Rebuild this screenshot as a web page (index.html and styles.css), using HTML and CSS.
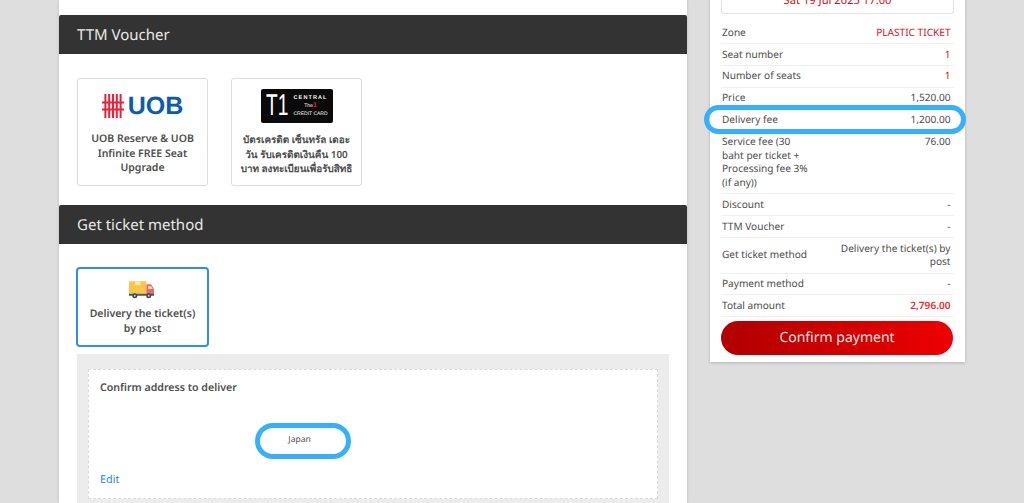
FILE: index.html
```html
<!DOCTYPE html>
<html lang="en">
  <head>
    <meta charset="utf-8" />
    <title>Booking payment</title>
    <link rel="stylesheet" href="styles.css">
  </head>
  <body>
    <div class="page">
      <main class="content">
        <section class="block">
          <h2 class="block-title">TTM Voucher</h2>
          <div class="card-list">
            <div class="card">
              <div class="card-logo uob">
                <svg class="uob-mark" width="22" height="24" viewBox="0 0 22 24">
                  <path d="M3.4 0v24M7.2 0v24M11 0v24M14.8 0v24M18.6 0v24" stroke="#e8203a" stroke-width="2" />
                  <path d="M0 8.5h22M0 15.5h22" stroke="#e8203a" stroke-width="2" />
                </svg>
                <span class="uob-text">UOB</span>
              </div>
              <p>UOB Reserve &amp; UOB Infinite FREE Seat Upgrade</p>
            </div>
            <div class="card">
              <div class="card-logo">
                <div class="t1-logo">
                  <span class="t1-big">T1</span>
                  <div class="t1-small">
                    <span class="t1-central">CENTRAL</span>
                    <span class="t1-the">The<b>1</b></span>
                    <span class="t1-credit">CREDIT CARD</span>
                  </div>
                </div>
              </div>
              <p class="thai">บัตรเครดิต เซ็นทรัล เดอะ วัน รับเครดิตเงินคืน 100 บาท ลงทะเบียนเพื่อรับสิทธิ</p>
            </div>
          </div>
        </section>

        <section class="block">
          <h2 class="block-title">Get ticket method</h2>
          <div class="method-list">
            <div class="card method active">
              <svg class="truck" width="25" height="19" viewBox="0 0 26 19">
                <rect x="0" y="1" width="18" height="14" rx="1" fill="#fbc54c" />
                <rect x="6" y="1" width="6" height="4" fill="#f6e3b0" />
                <path d="M18 4h5l3 5v6H18z" fill="#ee6a5f" />
                <path d="M20 6h3l1.6 3H20z" fill="#f3e3e0" />
                <rect x="0" y="14" width="26" height="2" fill="#46586a" />
                <circle cx="6" cy="16" r="2.6" fill="#34495e" />
                <circle cx="6" cy="16" r="1" fill="#c9d2da" />
                <circle cx="20.5" cy="16" r="2.6" fill="#34495e" />
                <circle cx="20.5" cy="16" r="1" fill="#c9d2da" />
              </svg>
              <p>Delivery the ticket(s) by post</p>
            </div>
          </div>
          <div class="address-panel">
            <div class="address-box">
              <h3>Confirm address to deliver</h3>
              <div class="address-text">
                <span class="circled">Japan</span>
              </div>
              <a class="edit" href="#">Edit</a>
            </div>
          </div>
        </section>
      </main>

      <aside class="summary">
        <div class="date-box">Sat 19 Jul 2025 17:00</div>
        <div class="row"><span class="label">Zone</span><span class="value red">PLASTIC TICKET</span></div>
        <div class="row"><span class="label">Seat number</span><span class="value red">1</span></div>
        <div class="row"><span class="label">Number of seats</span><span class="value red">1</span></div>
        <div class="row"><span class="label">Price</span><span class="value">1,520.00</span></div>
        <div class="row highlighted"><span class="label">Delivery fee</span><span class="value">1,200.00</span></div>
        <div class="row"><span class="label narrow">Service fee (30 baht per ticket + Processing fee 3% (if any))</span><span class="value">76.00</span></div>
        <div class="row"><span class="label">Discount</span><span class="value">-</span></div>
        <div class="row"><span class="label">TTM Voucher</span><span class="value">-</span></div>
        <div class="row center"><span class="label">Get ticket method</span><span class="value wrap">Delivery the ticket(s) by post</span></div>
        <div class="row"><span class="label">Payment method</span><span class="value">-</span></div>
        <div class="row"><span class="label">Total amount</span><span class="value total">2,796.00</span></div>
        <button class="confirm">Confirm payment</button>
      </aside>
    </div>
  </body>
</html>
```

FILE: styles.css
```css
html, body {
  margin: 0;
  padding: 0;
  height: 503px;
  overflow: hidden;
}

body {
  background-color: #dedede;
  font-family: "Noto Sans", "Open Sans", sans-serif;
  color: #4d4d4d;
  text-rendering: geometricPrecision;
}

.page {
  display: flex;
  align-items: flex-start;
  gap: 23px;
  padding-left: 59px;
}

/* left column */

.content {
  width: 628px;
  height: 503px;
  padding-top: 15px;
  box-sizing: border-box;
  background-color: #fff;
  box-shadow: 0 0 3px rgba(0, 0, 0, 0.15);
  overflow: hidden;
}

.block-title {
  margin: 0;
  height: 39px;
  padding-left: 18px;
  background-color: #333;
  border-radius: 2px 2px 0 0;
  color: #e9e9e9;
  font-size: 15px;
  font-weight: 400;
  line-height: 41px;
}

.card-list {
  display: flex;
  gap: 23px;
  padding: 24px 18px 19px;
}

.card {
  width: 131px;
  height: 108px;
  box-sizing: border-box;
  padding: 0 4px;
  border: 1px solid #dcdcdc;
  border-radius: 3px;
  text-align: center;
}

.card p {
  margin: 0;
  font-size: 10.5px;
  font-weight: 600;
  line-height: 14.7px;
}

.card p.thai {
  font-size: 9.9px;
}

.card-logo {
  display: flex;
  align-items: center;
  justify-content: center;
  height: 52px;
  padding-top: 1px;
}

.uob {
  gap: 4px;
}

.uob-text {
  color: #0b5cab;
  font-family: "Liberation Sans", sans-serif;
  font-size: 25px;
  font-weight: 700;
  line-height: 24px;
}

.t1-logo {
  display: flex;
  align-items: center;
  gap: 6px;
  width: 72px;
  height: 34px;
  box-sizing: border-box;
  padding-left: 5px;
  background-color: #0a0a0a;
  border-radius: 2px;
  color: #fff;
  font-family: "Liberation Sans", sans-serif;
}

.t1-big {
  width: 22px;
  font-size: 30px;
  line-height: 30px;
  transform: scaleX(0.64);
  transform-origin: left;
}

.t1-small {
  display: flex;
  flex-direction: column;
  align-items: center;
  gap: 2px;
}

.t1-small span {
  display: block;
  line-height: 6px;
}

.t1-central {
  font-size: 5.5px;
  font-weight: 700;
  letter-spacing: 1.1px;
}

.t1-the {
  font-size: 5px;
}

.t1-the b {
  color: #e8112d;
  font-size: 7px;
}

.t1-credit {
  font-size: 5px;
}

.method-list {
  padding: 23px 18px 7px 17px;
}

.method {
  width: 133px;
  height: 80px;
  padding: 11px 8px 0;
  border: 2px solid #2f8fe8;
  border-radius: 4px;
}

.truck {
  display: block;
  margin: 0 0 8px 43px;
}

.address-panel {
  margin: 0 18px;
  padding: 15px 11px 5px;
  background-color: #ececec;
}

.address-box {
  height: 130px;
  box-sizing: border-box;
  padding: 11px 11px;
  background-color: #fff;
  border: 1px dashed #dadada;
}

.address-box h3 {
  margin: 0;
  font-size: 10.6px;
  font-weight: 600;
  line-height: 14px;
}

.address-text {
  margin: 28px 0 0 155px;
  width: 96px;
  height: 36px;
}

.circled {
  display: block;
  height: 36px;
  box-sizing: border-box;
  padding: 6px 7px 0 0;
  border: 5px solid #36b0f8;
  border-radius: 18px;
  font-size: 8.5px;
  line-height: 12px;
  text-align: center;
}

.edit {
  display: block;
  margin-top: 13px;
  color: #2f88dc;
  font-size: 10.8px;
  text-decoration: none;
}

/* right column */

.summary {
  width: 255px;
  height: 372px;
  box-sizing: border-box;
  margin-top: -10px;
  padding: 0 11px;
  background-color: #fff;
  box-shadow: 0 1px 3px rgba(0, 0, 0, 0.2);
}

.date-box {
  height: 23.5px;
  box-sizing: border-box;
  margin-bottom: 8.8px;
  border: 1px solid #e3e3e3;
  border-top: 0;
  border-radius: 0 0 3px 3px;
  color: #d0121b;
  font-size: 11.2px;
  line-height: 22px;
  text-align: center;
}

.row {
  display: flex;
  justify-content: space-between;
  gap: 10px;
  padding: 3.5px 3.5px 3.5px 1px;
  border-bottom: 1px solid #f0f0f0;
  font-size: 10.1px;
  line-height: 13.8px;
}

.row.center {
  align-items: center;
}

.label {
  white-space: nowrap;
}

.label.narrow {
  width: 88px;
  white-space: normal;
}

.value {
  white-space: nowrap;
  text-align: right;
}

.value.wrap {
  width: 118px;
  white-space: normal;
}

.red {
  color: #d0121b;
}

.total {
  color: #ee2a30;
  font-weight: 600;
}

.highlighted {
  position: relative;
}

/* the oval drawn over the delivery row */
.highlighted::after {
  content: "";
  position: absolute;
  top: -4px;
  left: -17px;
  width: 262px;
  height: 29px;
  box-sizing: border-box;
  border: 5px solid #36b0f8;
  border-radius: 15px;
}

.confirm {
  display: block;
  width: 232px;
  height: 34px;
  margin-top: 3.5px;
  padding: 0;
  border: 0;
  border-radius: 17px;
  background: linear-gradient(90deg, #b00000, #ee0000);
  color: #f4e6e6;
  font-family: "Noto Sans", "Open Sans", sans-serif;
  font-size: 14px;
  text-rendering: geometricPrecision;
}
```
